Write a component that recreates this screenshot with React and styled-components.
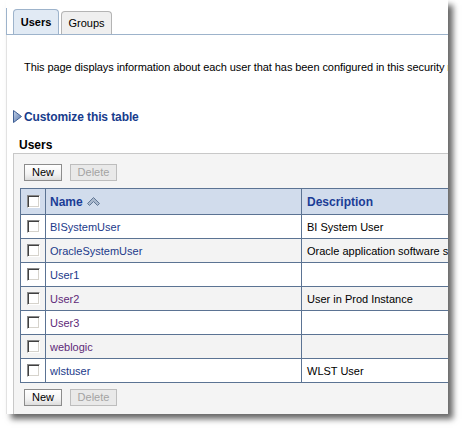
import React from "react";
import styled, { createGlobalStyle } from "styled-components";

const Global = createGlobalStyle`
  html, body { margin: 0; padding: 0; background: #ffffff; }
  body { font-family: "Liberation Sans", Arial, sans-serif; font-size: 11px; color: #000; }
`;

const Stage = styled.div`
  width: 462px;
  height: 428px;
  overflow: hidden;
  position: relative;
`;

const Window = styled.div`
  margin-left: 6px;
  width: 442px;
  height: 414px;
  background: #fff;
  overflow: hidden;
  box-shadow: 5px 5px 6px rgba(0, 0, 0, 0.6);
  display: flex;
  flex-direction: column;
`;

const TabBar = styled.div`
  margin-top: 8px;
  height: 26px;
  border-left: 1px solid #9db3cb;
  border-bottom: 1px solid #9db3cb;
  padding-left: 6px;
  display: flex;
  align-items: flex-end;
  gap: 2px;
`;

const Tab = styled.div`
  box-sizing: border-box;
  height: ${(p) => (p.$active ? 25 : 23)}px;
  width: ${(p) => p.$w}px;
  border: 1px solid ${(p) => (p.$active ? "#9db3cb" : "#b4b4b4")};
  border-bottom: none;
  border-radius: 4px 4px 0 0;
  background: ${(p) => (p.$active ? "#e1eaf4" : "#efefef")};
  font-weight: ${(p) => (p.$active ? "bold" : "normal")};
  font-size: 11px;
  color: #000;
  display: flex;
  align-items: center;
  justify-content: center;
`;

const Content = styled.div`
  flex: 1;
  border-left: 1px solid #e2e2e2;
  display: flex;
  flex-direction: column;
`;

const Intro = styled.div`
  margin: 26px 0 0 17px;
  line-height: 13px;
  font-size: 11px;
  letter-spacing: -0.08px;
  white-space: nowrap;
`;

const Customize = styled.div`
  margin: 36px 0 0 6px;
  display: flex;
  align-items: center;
  gap: 2px;
  height: 13px;
  font-weight: bold;
  font-size: 12px;
  letter-spacing: -0.1px;
  color: #173c8c;
`;

const SectionTitle = styled.div`
  margin: 15px 0 0 12px;
  font-weight: bold;
  font-size: 12px;
  line-height: 14px;
`;

const Panel = styled.div`
  margin: 1px 0 0 6px;
  flex: 1;
  background: #f4f4f4;
  border-top: 1px solid #c8c8c8;
  border-left: 1px solid #c8c8c8;
  padding: 10px 0 0 6px;
  display: flex;
  flex-direction: column;
`;

const Toolbar = styled.div`
  display: flex;
  gap: 8px;
  padding-left: 4px;
  margin-top: ${(p) => p.$top || 0}px;
`;

const Button = styled.button`
  box-sizing: border-box;
  height: 17px;
  width: ${(p) => p.$w}px;
  padding: 0;
  font-family: "Liberation Sans", Arial, sans-serif;
  font-size: 11px;
  line-height: 15px;
  border: 1px solid ${(p) => (p.disabled ? "#bdbdbd" : "#8c8c8c")};
  background: ${(p) =>
    p.disabled ? "#e9e9e9" : "linear-gradient(#ffffff, #f3f3f3 60%, #dcdcdc)"};
  color: ${(p) => (p.disabled ? "#a3a3a3" : "#000")};
  border-radius: 0;
`;

const Table = styled.table`
  margin-top: 7px;
  border-collapse: collapse;
  width: 600px;
  table-layout: fixed;
  font-size: 11px;
`;

const Th = styled.th`
  height: 25px;
  padding: 0 0 0 ${(p) => p.$pl ?? 4}px;
  border: 1px solid #5b7393;
  background: #d1dcec;
  color: #1b3d96;
  font-weight: bold;
  font-size: 12px;
  text-align: left;
`;

const Tr = styled.tr`
  background: ${(p) => (p.$alt ? "#f3f3f3" : "#ffffff")};
`;

const Td = styled.td`
  height: 23px;
  padding: 0 0 0 ${(p) => p.$pl ?? 4}px;
  border: 1px solid #5b7393;
  white-space: nowrap;
  overflow: hidden;
`;

const Link = styled.span`
  color: ${(p) => (p.$visited ? "#5e2a79" : "#1b3a8a")};
`;

const Check = styled.span`
  display: inline-block;
  box-sizing: border-box;
  width: 13px;
  height: 13px;
  background: #fff;
  border: 1px solid;
  border-color: #8a8a8a #ffffff #ffffff #8a8a8a;
  box-shadow: inset 1px 1px 0 #404040, inset -1px -1px 0 #d6d3cc;
  vertical-align: middle;
`;

const HeadInner = styled.div`
  display: flex;
  align-items: center;
  gap: 4px;
`;

const CheckCell = styled.div`
  display: flex;
  justify-content: center;
  align-items: center;
`;

const SortIcon = () => (
  <svg width="13" height="9" viewBox="0 0 13 9">
    <polygon
      points="0.5,6.5 6.5,0.5 12.5,6.5 10.5,8.5 6.5,4.5 2.5,8.5"
      fill="#a9b8cc"
      stroke="#627896"
      strokeWidth="1"
    />
  </svg>
);

const Triangle = () => (
  <svg width="9" height="13" viewBox="0 0 9 13">
    <defs>
      <linearGradient id="tg" x1="0" y1="0" x2="1" y2="1">
        <stop offset="0" stopColor="#c9d6ea" />
        <stop offset="1" stopColor="#4d6ea6" />
      </linearGradient>
    </defs>
    <polygon points="0.5,0.5 8.5,6.5 0.5,12.5" fill="url(#tg)" stroke="#3f5f95" />
  </svg>
);

const users = [
  { name: "BISystemUser", desc: "BI System User" },
  { name: "OracleSystemUser", desc: "Oracle application software system user" },
  { name: "User1", desc: "" },
  { name: "User2", desc: "User in Prod Instance", visited: true },
  { name: "User3", desc: "", visited: true },
  { name: "weblogic", desc: "", visited: true },
  { name: "wlstuser", desc: "WLST User" },
];

export default function App() {
  return (
    <Stage>
      <Global />
      <Window>
        <TabBar>
          <Tab $active $w={46}>Users</Tab>
          <Tab $w={51}>Groups</Tab>
        </TabBar>
        <Content>
          <Intro>
            This page displays information about each user that has been configured in this security realm.
          </Intro>
          <Customize>
            <Triangle />
            Customize this table
          </Customize>
          <SectionTitle>Users</SectionTitle>
          <Panel>
            <Toolbar>
              <Button $w={38}>New</Button>
              <Button $w={47} disabled>Delete</Button>
            </Toolbar>
            <Table>
              <colgroup>
                <col style={{ width: 25 }} />
                <col style={{ width: 256 }} />
                <col />
              </colgroup>
              <thead>
                <tr>
                  <Th $pl={0}>
                    <CheckCell><Check /></CheckCell>
                  </Th>
                  <Th>
                    <HeadInner>
                      Name <SortIcon />
                    </HeadInner>
                  </Th>
                  <Th $pl={5}>Description</Th>
                </tr>
              </thead>
              <tbody>
                {users.map((u, i) => (
                  <Tr key={u.name} $alt={i % 2 === 1}>
                    <Td $pl={0}>
                      <CheckCell><Check /></CheckCell>
                    </Td>
                    <Td>
                      <Link $visited={u.visited}>{u.name}</Link>
                    </Td>
                    <Td $pl={5}>{u.desc}</Td>
                  </Tr>
                ))}
              </tbody>
            </Table>
            <Toolbar $top={6}>
              <Button $w={38}>New</Button>
              <Button $w={47} disabled>Delete</Button>
            </Toolbar>
          </Panel>
        </Content>
      </Window>
    </Stage>
  );
}
